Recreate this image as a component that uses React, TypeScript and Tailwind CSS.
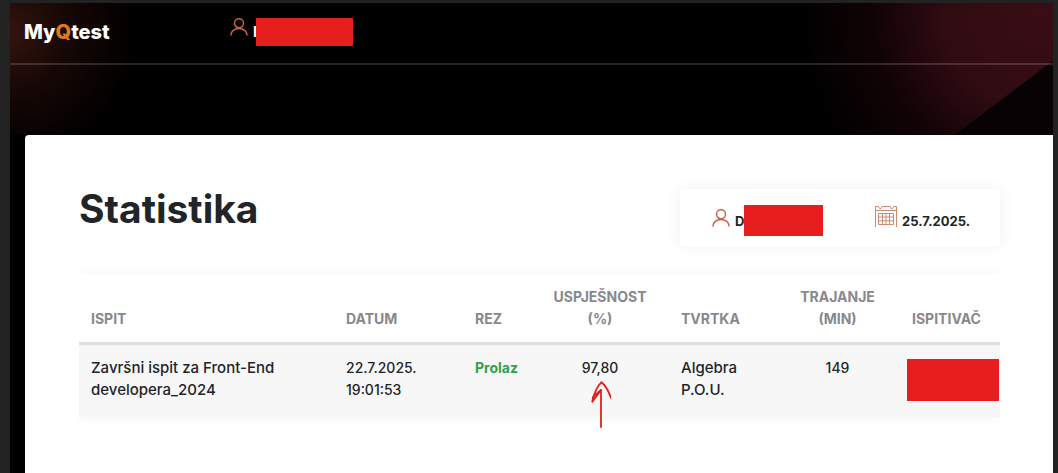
import clsx from "clsx"

type Exam = {
    name: string[]
    date: string[]
    result: string
    score: string
    company: string[]
    duration: string
}

const exams: Exam[] = [
    {
        name: ["Završni ispit za Front-End", "developera_2024"],
        date: ["22.7.2025.", "19:01:53"],
        result: "Prolaz",
        score: "97,80",
        company: ["Algebra", "P.O.U."],
        duration: "149",
    },
]

const columns = [
    { lines: ["ISPIT"], width: "w-[255px]" },
    { lines: ["DATUM"], width: "w-[129px]" },
    { lines: ["REZ"], width: "w-[68px]" },
    { lines: ["USPJEŠNOST", "(%)"], width: "w-[138px]", center: true },
    { lines: ["TVRTKA"], width: "w-[106px]" },
    { lines: ["TRAJANJE", "(MIN)"], width: "w-[125px]", center: true },
    { lines: ["ISPITIVAČ"], width: "w-[100px]" },
]

const UserIcon = () => (
    <svg width="18" height="18" viewBox="0 0 18 18" fill="none" stroke="#c8644a" strokeWidth="1.5" aria-hidden="true">
        <circle cx="9" cy="5.2" r="4.5" />
        <path d="M.8 17.500C1 13.400 4.400 10.400 9 10.400s8 3 8.200 7.100" />
    </svg>
)

const CalendarIcon = () => (
    <svg width="22" height="22" viewBox="0 0 22 22" fill="none" stroke="#cf8a76" strokeWidth="1" aria-hidden="true">
        <path d="M.5 22V1.500h3l1 2h1.500l1-2h8l1 2h1.500l1-2h3V22M.5 5.500h21" />
        <path d="M3.500 8.500h15v11h-15zM7.500 8.500v11M11 8.500v11M14.500 8.500v11M3.500 12h15M3.500 15.800h15" />
    </svg>
)

const ArrowMark = () => (
    <svg
        className="absolute left-1/2 top-9 -translate-x-1/2"
        width="22"
        height="48"
        viewBox="0 0 22 48"
        fill="none"
        stroke="#e02020"
        strokeWidth="1.8"
        strokeLinecap="round"
        strokeLinejoin="round"
        aria-hidden="true"
    >
        <path d="M12 46V9L3.500 20.500C5 13 8.500 5 12.500 1.200C17 5 20 11 22 17" />
        <path d="M3.500 20.500L4 16L12 9" />
    </svg>
)

const Lines = ({ items }: { items: string[] }) => (
    <>
        {items.map((item) => (
            <span key={item} className="block whitespace-nowrap">{item}</span>
        ))}
    </>
)

const Header = () => (
    <header className="flex h-[62px] items-start border-b-2 border-white/15 pl-[14px] pt-[15px] text-white">
        <a href="#" className="w-[206px] text-xl leading-7 font-extrabold">
            My<span className="text-[#dc7b22]">Q</span>test
        </a>
        <div className="flex items-start text-sm font-bold">
            <UserIcon />
            <span className="ml-[5px] w-[3px] leading-7">D</span>
            <span className="relative h-7 w-[97px] bg-[#e61e1e]" />
        </div>
    </header>
)

const InfoBox = () => (
    <div className="flex h-[58px] w-[320px] items-start bg-white pl-8 pt-4 text-[13px] font-bold shadow-[0_0_16px_rgba(0,0,0,0.06)]">
        <span className="pt-1">
            <UserIcon />
        </span>
        <span className="ml-[5px] w-[9px] leading-8">D</span>
        <span className="relative h-[31px] w-[79px] bg-[#e61e1e]" />
        <span className="ml-[52px]">
            <CalendarIcon />
        </span>
        <span className="ml-[5px] leading-8">25.7.2025.</span>
    </div>
)

const ExamTable = () => (
    <table className="w-full table-fixed text-left text-sm leading-[22px] shadow-[0_0_12px_rgba(0,0,0,0.05)] [clip-path:inset(-12px_0)]">
        <thead>
            <tr className="border-b-3 border-[#dedcdd] text-[#87888d]">
                {columns.map((column) => (
                    <th
                        key={column.lines[0]}
                        scope="col"
                        className={clsx("px-3 py-3 align-bottom font-bold", column.width, column.center && "text-center")}
                    >
                        <Lines items={column.lines} />
                    </th>
                ))}
            </tr>
        </thead>
        <tbody>
            {exams.map((exam) => (
                <tr key={exam.name[0]} className="bg-[#f7f7f7] align-top font-medium">
                    <td className="px-3 pt-3 pb-4 text-[15px] leading-[22px]"><Lines items={exam.name} /></td>
                    <td className="px-3 pt-3 pb-4"><Lines items={exam.date} /></td>
                    <td className="px-3 pt-3 pb-4 font-bold text-[#31a04d]">{exam.result}</td>
                    <td className="relative px-3 pt-3 pb-4 text-center">
                        {exam.score}
                        <ArrowMark />
                    </td>
                    <td className="px-3 pt-3 pb-4 text-[15px] leading-[22px]"><Lines items={exam.company} /></td>
                    <td className="px-3 pt-3 pb-4 text-center">{exam.duration}</td>
                    <td className="pt-[14px] pr-px pl-[7px]">
                        <div className="h-[42px] bg-[#e61e1e]" />
                    </td>
                </tr>
            ))}
        </tbody>
    </table>
)

const App = () => {
    return (
        <div className="min-h-screen bg-[#222222] pt-[3px] pr-[5px] pl-[10px] font-[Inter,'Liberation_Sans',sans-serif] text-[#212529]">
            <div className="relative flex min-h-[calc(100vh-3px)] flex-col bg-black">
                <svg className="absolute inset-x-0 top-0 h-[132px] w-full" viewBox="0 0 1043 132" preserveAspectRatio="none" aria-hidden="true">
                    <defs>
                        <radialGradient id="warm" gradientUnits="userSpaceOnUse" cx="0" cy="30" r="125">
                            <stop offset="0" stopColor="#34140c" />
                            <stop offset="0.45" stopColor="#170806" />
                            <stop offset="1" stopColor="#000000" />
                        </radialGradient>
                        <radialGradient id="wine" gradientUnits="userSpaceOnUse" cx="1030" cy="10" r="240">
                            <stop offset="0" stopColor="#3a0d16" />
                            <stop offset="0.4" stopColor="#300b12" />
                            <stop offset="0.7" stopColor="#100305" />
                            <stop offset="1" stopColor="#000000" />
                        </radialGradient>
                    </defs>
                    <path d="M0 0h260v132H0z" fill="url(#warm)" />
                    <path d="M780 0h263v58L945 132H780z" fill="url(#wine)" />
                    <path d="M1043 58v74h-98z" fill="#080204" />
                </svg>
                <div className="relative">
                    <Header />
                </div>
                <main className="relative mt-[70px] ml-[15px] grow rounded-tl bg-white pt-[54px] pr-[53px] pb-12 pl-[54px]">
                    <div className="mb-[27px] flex items-start justify-between">
                        <h1 className="text-[39px] leading-10 font-bold">Statistika</h1>
                        <InfoBox />
                    </div>
                    <ExamTable />
                </main>
            </div>
        </div>
    )
}

export default App
